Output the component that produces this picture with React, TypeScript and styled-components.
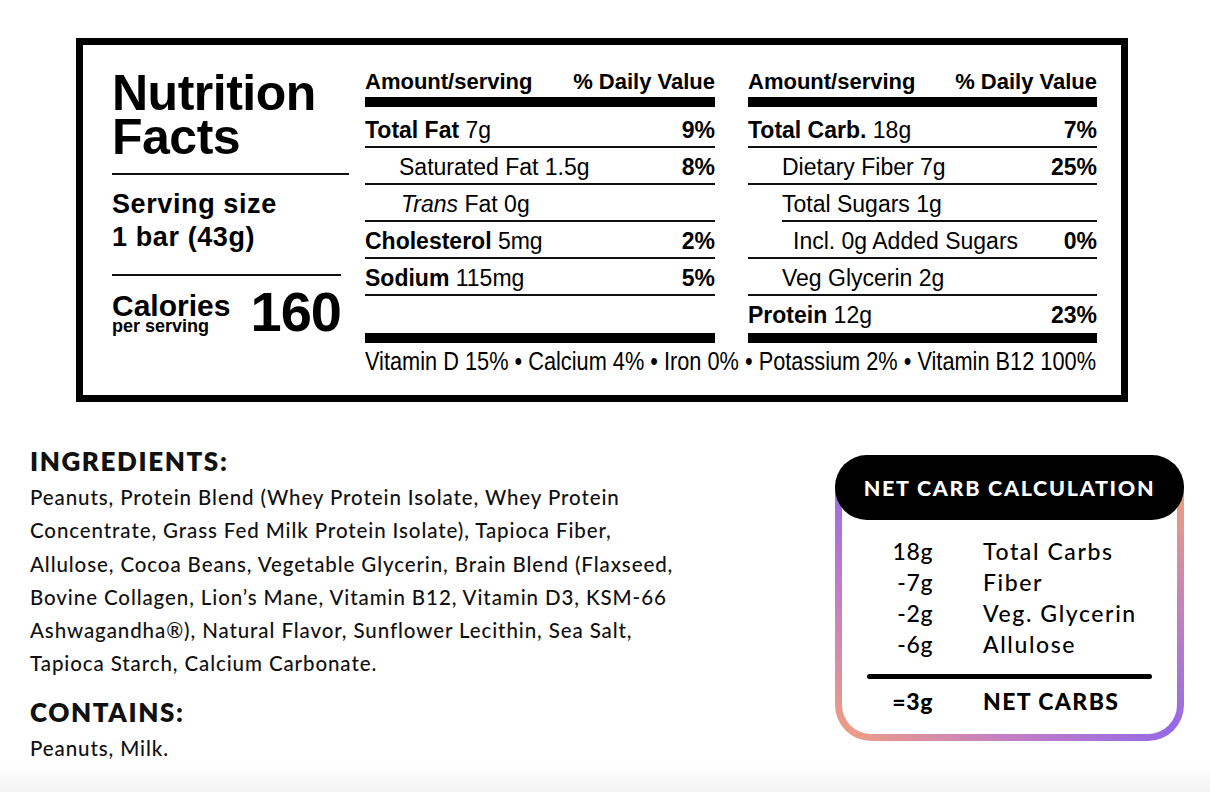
import React from "react";
import styled, { createGlobalStyle } from "styled-components";

const GlobalStyle = createGlobalStyle`
  html, body { margin: 0; padding: 0; background: #fff; }
  body { font-family: "Liberation Sans", Arial, sans-serif; color: #000; }
  *, *::before, *::after { box-sizing: border-box; }
`;

const Page = styled.div`
  width: 1210px;
  height: 792px;
  overflow: hidden;
  padding-top: 38px;
  background: linear-gradient(to bottom, #fff 0, #fff 764px, #f4f4f4 792px);
`;

/* ---------- Nutrition label ---------- */

const LabelBox = styled.section`
  margin-left: 76px;
  width: 1052px;
  height: 364px;
  border: 7px solid #000;
  display: flex;
  padding: 0 24px 0 29px;
  font-family: "Liberation Sans", Arial, sans-serif;
  color: #000;
`;

const LeftCol = styled.div`
  width: 237px;
  flex: none;
  padding-top: 26px;
  display: flex;
  flex-direction: column;
`;

const Title = styled.h1`
  margin: 0;
  font-size: 50px;
  line-height: 44px;
  font-weight: 700;
  letter-spacing: -0.5px;
`;

const Rule = styled.div<{ $width?: number; $mt: number }>`
  height: 2px;
  background: #111;
  width: ${(p) => (p.$width ? `${p.$width}px` : "100%")};
  margin-top: ${(p) => p.$mt}px;
`;

const Serving = styled.div`
  margin-top: 13px;
  font-size: 27px;
  line-height: 33px;
  font-weight: 700;
  letter-spacing: 0.6px;
`;

const CaloriesRow = styled.div`
  width: 229px;
  margin-top: 15px;
  display: flex;
  justify-content: space-between;
  align-items: flex-end;
`;

const CalLabel = styled.div`
  display: flex;
  flex-direction: column;
  font-weight: 700;
`;

const CalWord = styled.span`
  font-size: 30px;
  line-height: 26px;
`;

const PerServing = styled.span`
  font-size: 18px;
  line-height: 14px;
`;

const CalNumber = styled.span`
  font-size: 56px;
  line-height: 42px;
  font-weight: 700;
  letter-spacing: -1px;
`;

const RightArea = styled.div`
  flex: 1;
  margin-left: 16px;
  padding-top: 25px;
  display: flex;
  flex-direction: column;
`;

const Columns = styled.div`
  display: grid;
  grid-template-columns: 350px 349px;
  column-gap: 33px;
`;

const Column = styled.div`
  display: flex;
  flex-direction: column;
`;

const ColHeader = styled.div`
  display: flex;
  justify-content: space-between;
  font-size: 22px;
  line-height: 24px;
  font-weight: 700;
  margin-bottom: 3px;
`;

const ThickBar = styled.div<{ $bottom?: boolean }>`
  height: 10px;
  background: #000;
  margin-top: ${(p) => (p.$bottom ? "auto" : "0")};
  margin-bottom: ${(p) => (p.$bottom ? "0" : "4px")};
`;

const Row = styled.div<{ $indent?: number; $lineIndent?: number; $noLine?: boolean }>`
  display: flex;
  justify-content: space-between;
  align-items: baseline;
  height: 37px;
  padding-top: 4px;
  padding-left: ${(p) => p.$indent ?? 0}px;
  line-height: 31px;
  font-size: 23px;
  font-weight: 400;
  white-space: nowrap;
  background-image: ${(p) => (p.$noLine ? "none" : "linear-gradient(#111, #111)")};
  background-repeat: no-repeat;
  background-position: right bottom;
  background-size: calc(100% - ${(p) => p.$lineIndent ?? 0}px) 2px;
`;

const B = styled.span`
  font-weight: 700;
`;

const I = styled.span`
  font-style: italic;
`;

const Pct = styled.span`
  font-weight: 700;
`;

const Vitamins = styled.div`
  margin-top: 3px;
  width: max-content;
  font-size: 25.6px;
  line-height: 30px;
  white-space: nowrap;
  transform: scaleX(0.85);
  transform-origin: left center;
`;

/* ---------- Lower section ---------- */

const Lower = styled.div`
  display: flex;
  justify-content: space-between;
  align-items: flex-start;
  margin-top: 44px;
  padding: 0 26px 0 30px;
  font-family: Lato, "Open Sans", sans-serif;
  color: #111;
`;

const Ingredients = styled.div`
  display: flex;
  flex-direction: column;
`;

const Heading = styled.h2<{ $mt?: number }>`
  margin: ${(p) => p.$mt ?? 0}px 0 0;
  font-size: 26px;
  line-height: 30px;
  font-weight: 800;
  letter-spacing: 1.6px;
`;

const TextBlock = styled.div`
  margin-top: 5px;
  font-size: 20.5px;
  line-height: 33.3px;
  font-weight: 500;
  letter-spacing: 0.9px;
`;

const Line = styled.div`
  white-space: nowrap;
`;

const Card = styled.div`
  margin-top: 9px;
  width: 349px;
  height: 286px;
  border-radius: 36px;
  padding: 0 7px 7px;
  display: flex;
  flex-direction: column;
  background: linear-gradient(to top right, #f2a17c 0%, #c47fc4 25%, #9468e8 50%, #c785b6 75%, #f8aa68 100%);
`;

const CardHeader = styled.div`
  position: relative;
  z-index: 1;
  margin: 0 -7px;
  height: 65px;
  border-radius: 32px;
  background: #000;
  color: #fff;
  display: flex;
  align-items: center;
  justify-content: center;
  font-size: 21.5px;
  font-weight: 900;
  letter-spacing: 1.7px;
`;

const CardBody = styled.div`
  flex: 1;
  margin-top: -32px;
  padding: 48px 25px 0;
  background: #fff;
  border-radius: 0 0 29px 29px;
  color: #000;
`;

const CalcGrid = styled.div<{ $bold?: boolean }>`
  display: grid;
  grid-template-columns: 66px 1fr;
  column-gap: 50px;
  font-size: 23px;
  line-height: 31px;
  letter-spacing: ${(p) => (p.$bold ? 1.4 : 1.6)}px;
  font-weight: ${(p) => (p.$bold ? 900 : 500)};
`;

const Amount = styled.span`
  text-align: right;
  letter-spacing: 0.6px;
`;

const Divider = styled.div`
  margin-top: 14px;
  height: 5px;
  border-radius: 3px;
  background: #000;
`;

const ResultGrid = styled(CalcGrid)`
  margin-top: 7px;
`;

type RowData = {
  bold?: string;
  italic?: string;
  text: string;
  pct?: string;
  indent?: number;
  lineIndent?: number;
  noLine?: boolean;
};

const leftRows: RowData[] = [
  { bold: "Total Fat", text: " 7g", pct: "9%" },
  { text: "Saturated Fat 1.5g", pct: "8%", indent: 34 },
  { italic: "Trans", text: " Fat 0g", indent: 36 },
  { bold: "Cholesterol", text: " 5mg", pct: "2%" },
  { bold: "Sodium", text: " 115mg", pct: "5%" },
];

const rightRows: RowData[] = [
  { bold: "Total Carb.", text: " 18g", pct: "7%" },
  { text: "Dietary Fiber 7g", pct: "25%", indent: 34 },
  { text: "Total Sugars 1g", indent: 34, lineIndent: 34 },
  { text: "Incl. 0g Added Sugars", pct: "0%", indent: 45 },
  { text: "Veg Glycerin 2g", indent: 34 },
  { bold: "Protein", text: " 12g", pct: "23%", noLine: true },
];

const ingredientLines = [
  "Peanuts, Protein Blend (Whey Protein Isolate, Whey Protein",
  "Concentrate, Grass Fed Milk Protein Isolate), Tapioca Fiber,",
  "Allulose, Cocoa Beans, Vegetable Glycerin, Brain Blend (Flaxseed,",
  "Bovine Collagen, Lion\u2019s Mane, Vitamin B12, Vitamin D3, KSM-66",
  "Ashwagandha\u00AE), Natural Flavor, Sunflower Lecithin, Sea Salt,",
  "Tapioca Starch, Calcium Carbonate.",
];

const calcRows = [
  ["18g", "Total Carbs"],
  ["-7g", "Fiber"],
  ["-2g", "Veg. Glycerin"],
  ["-6g", "Allulose"],
];

function NutrientRow({ r }: { r: RowData }) {
  return (
    <Row $indent={r.indent} $lineIndent={r.lineIndent} $noLine={r.noLine}>
      <span>
        {r.bold && <B>{r.bold}</B>}
        {r.italic && <I>{r.italic}</I>}
        {r.text}
      </span>
      {r.pct && <Pct>{r.pct}</Pct>}
    </Row>
  );
}

function NutrientColumn({ rows }: { rows: RowData[] }) {
  return (
    <Column>
      <ColHeader>
        <span>Amount/serving</span>
        <span>% Daily Value</span>
      </ColHeader>
      <ThickBar />
      {rows.map((r, i) => (
        <NutrientRow key={i} r={r} />
      ))}
      <ThickBar $bottom />
    </Column>
  );
}

export default function App() {
  return (
    <>
      <GlobalStyle />
      <Page>
        <LabelBox>
          <LeftCol>
            <Title>
              Nutrition
              <br />
              Facts
            </Title>
            <Rule $mt={14} />
            <Serving>
              Serving size
              <br />1 bar (43g)
            </Serving>
            <Rule $mt={20} $width={229} />
            <CaloriesRow>
              <CalLabel>
                <CalWord>Calories</CalWord>
                <PerServing>per serving</PerServing>
              </CalLabel>
              <CalNumber>160</CalNumber>
            </CaloriesRow>
          </LeftCol>
          <RightArea>
            <Columns>
              <NutrientColumn rows={leftRows} />
              <NutrientColumn rows={rightRows} />
            </Columns>
            <Vitamins>
              Vitamin D 15% • Calcium 4% • Iron 0% • Potassium 2% • Vitamin B12 100%
            </Vitamins>
          </RightArea>
        </LabelBox>

        <Lower>
          <Ingredients>
            <Heading>INGREDIENTS:</Heading>
            <TextBlock>
              {ingredientLines.map((l, i) => (
                <Line key={i}>{l}</Line>
              ))}
            </TextBlock>
            <Heading $mt={16}>CONTAINS:</Heading>
            <TextBlock>
              <Line>Peanuts, Milk.</Line>
            </TextBlock>
          </Ingredients>

          <Card>
            <CardHeader>NET CARB CALCULATION</CardHeader>
            <CardBody>
              <CalcGrid>
                {calcRows.map(([a, l]) => (
                  <React.Fragment key={l}>
                    <Amount>{a}</Amount>
                    <span>{l}</span>
                  </React.Fragment>
                ))}
              </CalcGrid>
              <Divider />
              <ResultGrid $bold>
                <Amount>=3g</Amount>
                <span>NET CARBS</span>
              </ResultGrid>
            </CardBody>
          </Card>
        </Lower>
      </Page>
    </>
  );
}
